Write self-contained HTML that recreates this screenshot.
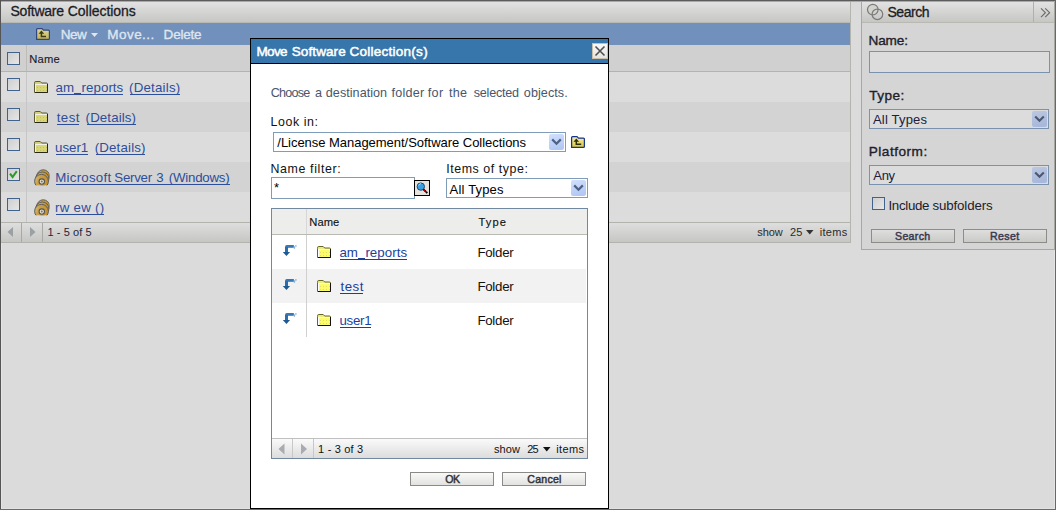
<!DOCTYPE html>
<html><head><meta charset="utf-8"><title>Software Collections</title>
<style>html,body{margin:0;padding:0;background:#dbdbdb;overflow:hidden;width:1056px;height:510px}text{font-family:"Liberation Sans", sans-serif}rect{shape-rendering:crispEdges}</style>
</head><body>
<svg width="1056" height="510" viewBox="0 0 1056 510" style="display:block">
<defs>
<linearGradient id="gTitle" x1="0" y1="0" x2="0" y2="1"><stop offset="0" stop-color="#e2e2e2"/><stop offset="1" stop-color="#c6c6c4"/></linearGradient>
<linearGradient id="gPager" x1="0" y1="0" x2="0" y2="1"><stop offset="0" stop-color="#dedede"/><stop offset="1" stop-color="#c6c6c4"/></linearGradient>
<linearGradient id="gPagerD" x1="0" y1="0" x2="0" y2="1"><stop offset="0" stop-color="#fafafa"/><stop offset="1" stop-color="#dcdcdc"/></linearGradient>
<linearGradient id="gBtn" x1="0" y1="0" x2="0" y2="1"><stop offset="0" stop-color="#e0e0e0"/><stop offset="1" stop-color="#c8c8c6"/></linearGradient>
<linearGradient id="gClose" x1="0" y1="0" x2="0" y2="1"><stop offset="0" stop-color="#fafafa"/><stop offset="1" stop-color="#e2e2de"/></linearGradient>
<linearGradient id="gBtnD" x1="0" y1="0" x2="0" y2="1"><stop offset="0" stop-color="#fbfbfb"/><stop offset="1" stop-color="#e0e0de"/></linearGradient>
<linearGradient id="gSel" x1="0" y1="0" x2="0.3" y2="1"><stop offset="0" stop-color="#d2e0fc"/><stop offset="1" stop-color="#b2c8f4"/></linearGradient>
<linearGradient id="gSelG" x1="0" y1="0" x2="0.3" y2="1"><stop offset="0" stop-color="#bcc8e2"/><stop offset="1" stop-color="#a8b8da"/></linearGradient>
<linearGradient id="gFU" x1="0" y1="0" x2="0" y2="1"><stop offset="0" stop-color="#f6eeb8"/><stop offset="1" stop-color="#dcc630"/></linearGradient>
<linearGradient id="gFUg" x1="0" y1="0" x2="0" y2="1"><stop offset="0" stop-color="#dcd6a8"/><stop offset="1" stop-color="#c4b448"/></linearGradient>
<pattern id="dots" width="3" height="3" patternUnits="userSpaceOnUse"><rect width="3" height="3" fill="#d9d676"/><rect width="1" height="1" fill="#c2be6a"/></pattern>
<pattern id="dotsB" width="3" height="3" patternUnits="userSpaceOnUse"><rect width="3" height="3" fill="#fcfc6a"/><rect width="1" height="1" fill="#dede66"/></pattern>

<linearGradient id="gCb" x1="0" y1="0" x2="1" y2="1"><stop offset="0" stop-color="#cfcfcf"/><stop offset="1" stop-color="#e6e6e6"/></linearGradient>






<linearGradient id="gDisc" x1="0" y1="0" x2="1" y2="0.4"><stop offset="0" stop-color="#d8c898"/><stop offset="0.4" stop-color="#c9a048"/><stop offset="1" stop-color="#c29030"/></linearGradient>



</defs><g><rect x="0" y="0" width="1056" height="510" fill="#dbdbdb" />
<rect x="1" y="243" width="1" height="266" fill="#e4e4e4" />
<rect x="1054" y="250" width="1" height="259" fill="#e4e4e4" />
<rect x="1" y="508" width="1054" height="1" fill="#e2e2e2" />
<rect x="1" y="2" width="850" height="20" fill="url(#gTitle)" />
<rect x="1" y="22" width="850" height="1" fill="#b9b9b2" />
<text x="10.50" y="16" font-size="14" fill="#1c1c26" font-weight="normal" stroke="#1c1c26" stroke-width="0.3" textLength="53.55" lengthAdjust="spacing">Software</text>
<text x="67.80" y="16" font-size="14" fill="#1c1c26" font-weight="normal" stroke="#1c1c26" stroke-width="0.3" textLength="67.98" lengthAdjust="spacing">Collections</text>
<rect x="1" y="23" width="850" height="22" fill="#7290bc" />
<g transform="translate(36,28)">
 <path d="M0.6 11.4 V1.6 Q0.6 0.6 1.6 0.6 H6 L7.5 2.1 H12.4 Q13.4 2.1 13.4 3.1 V10.4 Q13.4 11.4 12.4 11.4 Z" fill="url(#gFUg)" stroke="#31467e" stroke-width="1.2"/>
 <path d="M5.4 2.4 L8.2 5.8 H2.6 Z" fill="#3c3c18"/>
 <path d="M5.4 5 V8.5 H10" fill="none" stroke="#3c3c18" stroke-width="1.5"/>
</g>
<text x="60.80" y="39" font-size="13.5" fill="#dfe6ef" font-weight="normal" stroke="#dfe6ef" stroke-width="0.35" textLength="26.02" lengthAdjust="spacing">New</text>
<path d="M91 33 h7 l-3.5 4 z" fill="#dfe6ef"/>
<text x="107.30" y="39" font-size="13.5" fill="#dfe6ef" font-weight="normal" stroke="#dfe6ef" stroke-width="0.35" textLength="46.97" lengthAdjust="spacing">Move...</text>
<text x="163.60" y="39" font-size="13.5" fill="#dfe6ef" font-weight="normal" stroke="#dfe6ef" stroke-width="0.35" textLength="38.03" lengthAdjust="spacing">Delete</text>
<rect x="1" y="45" width="850" height="26" fill="#d0d0d0" />
<rect x="1" y="71" width="850" height="1" fill="#b4b4ac" />
<rect x="26" y="45" width="1" height="26" fill="#bdbdb6" />
<g transform="translate(7,52)"><rect x="0" y="0" width="13" height="13" fill="#40628c"/><rect x="1" y="1" width="11" height="11" fill="url(#gCb)"/></g>
<text x="29.20" y="63" font-size="11.2" fill="#1a1a28" font-weight="normal" stroke="#1a1a28" stroke-width="0.12" textLength="30.44" lengthAdjust="spacing">Name</text>
<rect x="1" y="72" width="849" height="30" fill="#dcdcdc" />
<rect x="26" y="72" width="1" height="30" fill="#c6c6c6" />
<g transform="translate(7,78)"><rect x="0" y="0" width="13" height="13" fill="#40628c"/><rect x="1" y="1" width="11" height="11" fill="url(#gCb)"/></g>
<rect x="1" y="102" width="849" height="30" fill="#d3d3d3" />
<rect x="26" y="102" width="1" height="30" fill="#c6c6c6" />
<g transform="translate(7,108)"><rect x="0" y="0" width="13" height="13" fill="#40628c"/><rect x="1" y="1" width="11" height="11" fill="url(#gCb)"/></g>
<rect x="1" y="132" width="849" height="30" fill="#dcdcdc" />
<rect x="26" y="132" width="1" height="30" fill="#c6c6c6" />
<g transform="translate(7,138)"><rect x="0" y="0" width="13" height="13" fill="#40628c"/><rect x="1" y="1" width="11" height="11" fill="url(#gCb)"/></g>
<rect x="1" y="162" width="849" height="30" fill="#d3d3d3" />
<rect x="26" y="162" width="1" height="30" fill="#c6c6c6" />
<g transform="translate(7,168)"><rect x="0" y="0" width="13" height="13" fill="#40628c"/><rect x="1" y="1" width="11" height="11" fill="url(#gCb)"/></g>
<rect x="1" y="192" width="849" height="30" fill="#dcdcdc" />
<rect x="26" y="192" width="1" height="30" fill="#c6c6c6" />
<g transform="translate(7,198)"><rect x="0" y="0" width="13" height="13" fill="#40628c"/><rect x="1" y="1" width="11" height="11" fill="url(#gCb)"/></g>
<g transform="translate(34,81)">
 <path d="M0.5 2.5 V1.8 Q0.5 0.5 1.8 0.5 H6.2 L7.7 2 H12.5 Q13.5 2 13.5 3 V11.5 H0.5 Z" fill="#d6d274" stroke="#5a5a3a" stroke-width="1"/>
 <rect x="1" y="3" width="12" height="8" fill="url(#dots)"/>
 <path d="M1 3.5 H13" stroke="#f2f2e6" stroke-width="1"/>
 <path d="M1.5 3 V11" stroke="#f2f2e6" stroke-width="1"/>
 <path d="M13.5 3 V11.5 H1" fill="none" stroke="#26261a" stroke-width="1"/>
</g>
<text x="55.50" y="92" font-size="13.3" fill="#2d4e9c" font-weight="normal" textLength="67.77" lengthAdjust="spacing">am_reports</text>
<rect x="56.5" y="94" width="66.5" height="1" fill="#2d4e9c" />
<rect x="74" y="93" width="7" height="1" fill="#2d4e9c" />
<text x="129.00" y="92" font-size="13.3" fill="#2d4e9c" font-weight="normal" textLength="51.20" lengthAdjust="spacing">(Details)</text>
<rect x="130" y="94" width="49.69999999999999" height="1" fill="#2d4e9c" />
<g transform="translate(34,111)">
 <path d="M0.5 2.5 V1.8 Q0.5 0.5 1.8 0.5 H6.2 L7.7 2 H12.5 Q13.5 2 13.5 3 V11.5 H0.5 Z" fill="#d6d274" stroke="#5a5a3a" stroke-width="1"/>
 <rect x="1" y="3" width="12" height="8" fill="url(#dots)"/>
 <path d="M1 3.5 H13" stroke="#f2f2e6" stroke-width="1"/>
 <path d="M1.5 3 V11" stroke="#f2f2e6" stroke-width="1"/>
 <path d="M13.5 3 V11.5 H1" fill="none" stroke="#26261a" stroke-width="1"/>
</g>
<text x="56.70" y="122" font-size="13.3" fill="#2d4e9c" font-weight="normal" textLength="22.74" lengthAdjust="spacing">test</text>
<rect x="56.7" y="124" width="22.299999999999997" height="1" fill="#2d4e9c" />
<text x="85.60" y="122" font-size="13.3" fill="#2d4e9c" font-weight="normal" textLength="50.40" lengthAdjust="spacing">(Details)</text>
<rect x="86.6" y="124" width="48.900000000000006" height="1" fill="#2d4e9c" />
<g transform="translate(34,141)">
 <path d="M0.5 2.5 V1.8 Q0.5 0.5 1.8 0.5 H6.2 L7.7 2 H12.5 Q13.5 2 13.5 3 V11.5 H0.5 Z" fill="#d6d274" stroke="#5a5a3a" stroke-width="1"/>
 <rect x="1" y="3" width="12" height="8" fill="url(#dots)"/>
 <path d="M1 3.5 H13" stroke="#f2f2e6" stroke-width="1"/>
 <path d="M1.5 3 V11" stroke="#f2f2e6" stroke-width="1"/>
 <path d="M13.5 3 V11.5 H1" fill="none" stroke="#26261a" stroke-width="1"/>
</g>
<text x="55.00" y="152" font-size="13.3" fill="#2d4e9c" font-weight="normal" textLength="33.27" lengthAdjust="spacing">user1</text>
<rect x="56" y="154" width="32" height="1" fill="#2d4e9c" />
<text x="94.70" y="152" font-size="13.3" fill="#2d4e9c" font-weight="normal" textLength="50.80" lengthAdjust="spacing">(Details)</text>
<rect x="95.7" y="154" width="49.3" height="1" fill="#2d4e9c" />
<g transform="translate(33,169)">
 <clipPath id="cpDisc"><rect x="0" y="0" width="16.5" height="16.3"/></clipPath>
 <g clip-path="url(#cpDisc)" stroke="#5c5c5c" stroke-width="1">
  <circle cx="10.2" cy="7.2" r="6.4" fill="url(#gDisc)"/>
  <circle cx="9.3" cy="9.7" r="6.7" fill="url(#gDisc)"/>
  <circle cx="8.5" cy="12.3" r="6.9" fill="url(#gDisc)"/>
 </g>
 <circle cx="8.8" cy="12.6" r="2.7" fill="#e4e0d0" stroke="#555" stroke-width="1.1"/>
 <circle cx="8.8" cy="12.6" r="1" fill="#777"/>
</g>
<g transform="translate(7,168)"><path d="M3 5.6 L5.6 9 L9.8 3.2" fill="none" stroke="#2c9c2c" stroke-width="2.1"/></g>
<text x="55.30" y="182" font-size="13.3" fill="#2d4e9c" font-weight="normal" textLength="55.84" lengthAdjust="spacing">Microsoft</text>
<text x="114.30" y="182" font-size="13.3" fill="#2d4e9c" font-weight="normal" textLength="37.87" lengthAdjust="spacing">Server</text>
<text x="156.30" y="182" font-size="13.3" fill="#2d4e9c" font-weight="normal" textLength="7.41" lengthAdjust="spacing">3</text>
<text x="168.80" y="182" font-size="13.3" fill="#2d4e9c" font-weight="normal" textLength="60.90" lengthAdjust="spacing">(Windows)</text>
<rect x="56" y="184" width="173.8" height="1" fill="#2d4e9c" />
<g transform="translate(33,199)">
 <clipPath id="cpDisc"><rect x="0" y="0" width="16.5" height="16.3"/></clipPath>
 <g clip-path="url(#cpDisc)" stroke="#5c5c5c" stroke-width="1">
  <circle cx="10.2" cy="7.2" r="6.4" fill="url(#gDisc)"/>
  <circle cx="9.3" cy="9.7" r="6.7" fill="url(#gDisc)"/>
  <circle cx="8.5" cy="12.3" r="6.9" fill="url(#gDisc)"/>
 </g>
 <circle cx="8.8" cy="12.6" r="2.7" fill="#e4e0d0" stroke="#555" stroke-width="1.1"/>
 <circle cx="8.8" cy="12.6" r="1" fill="#777"/>
</g>
<text x="55.00" y="212" font-size="13.3" fill="#2d4e9c" font-weight="normal" textLength="49.08" lengthAdjust="spacing">rw ew ()</text>
<rect x="56" y="214" width="47.8" height="1" fill="#2d4e9c" />
<rect x="1" y="222" width="850" height="1" fill="#b3b3ad" />
<rect x="1" y="223" width="850" height="19" fill="url(#gPager)" />
<rect x="1" y="242" width="850" height="1" fill="#b3b3ad" />
<rect x="21" y="223" width="1" height="19" fill="#a9a9a3" />
<rect x="42" y="223" width="1" height="19" fill="#a9a9a3" />
<path d="M7.5 232 L13 227 V237 Z" fill="#9aa0a4"/>
<path d="M35.5 232 L30 227 V237 Z" fill="#9aa0a4"/>
<text x="47.50" y="236" font-size="11" fill="#25253a" font-weight="normal" textLength="44.22" lengthAdjust="spacing">1 - 5 of 5</text>
<text x="757.20" y="236" font-size="11" fill="#2a2a2a" font-weight="normal" textLength="25.49" lengthAdjust="spacing">show</text>
<text x="790.00" y="236" font-size="11" fill="#2a2a2a" font-weight="normal" textLength="12.25" lengthAdjust="spacing">25</text>
<path d="M806 230 h7.5 l-3.75 4.5 z" fill="#333"/>
<text x="819.70" y="236" font-size="11" fill="#2a2a2a" font-weight="normal" textLength="27.58" lengthAdjust="spacing">items</text>
<rect x="850" y="1" width="1" height="242" fill="#b5b5b0" />
<rect x="861" y="1" width="194" height="249" fill="#d5d5d5" />
<rect x="862" y="2" width="192" height="20" fill="url(#gTitle)" />
<rect x="862" y="22" width="192" height="1" fill="#b9b9b2" />
<rect x="861" y="1" width="1" height="249" fill="#a8a8a2" />
<rect x="1054" y="1" width="1" height="249" fill="#a8a8a2" />
<rect x="861" y="249" width="194" height="1" fill="#a8a8a2" />
<rect x="1033" y="1" width="1" height="21" fill="#b0b0aa" />
<g fill="none" stroke="#7c7c7c" stroke-width="1.25"><circle cx="872.8" cy="9.6" r="5.3" fill="#d2d2ce"/><circle cx="877.4" cy="14.3" r="5.3"/></g>
<text x="887.40" y="17" font-size="14" fill="#1c1c26" font-weight="normal" stroke="#1c1c26" stroke-width="0.3" textLength="42.26" lengthAdjust="spacing">Search</text>
<path d="M1041 8.3 l4.4 4.4 l-4.4 4.4 M1045.2 8.3 l4.4 4.4 l-4.4 4.4" fill="none" stroke="#6a6a6a" stroke-width="1.15"/>
<text x="868.40" y="44.6" font-size="13.6" fill="#20202a" font-weight="normal" stroke="#20202a" stroke-width="0.35" textLength="39.65" lengthAdjust="spacing">Name:</text>
<rect x="869" y="51" width="181" height="22" fill="#dcdcdc" />
<rect x="869" y="51" width="181" height="1" fill="#7a92ad" />
<rect x="869" y="72" width="181" height="1" fill="#7a92ad" />
<rect x="869" y="51" width="1" height="22" fill="#7a92ad" />
<rect x="1049" y="51" width="1" height="22" fill="#7a92ad" />
<text x="869.20" y="99.6" font-size="13.6" fill="#20202a" font-weight="normal" stroke="#20202a" stroke-width="0.35" textLength="35.05" lengthAdjust="spacing">Type:</text>
<rect x="869" y="109" width="180" height="20" fill="#dcdcdc" />
<rect x="869" y="109" width="180" height="1" fill="#7a92ad" />
<rect x="869" y="128" width="180" height="1" fill="#7a92ad" />
<rect x="869" y="109" width="1" height="20" fill="#7a92ad" />
<rect x="1048" y="109" width="1" height="20" fill="#7a92ad" />
<g transform="translate(1032,111)"><rect x="0" y="0" width="15" height="16" rx="2" fill="url(#gSelG)" style="shape-rendering:auto"/><path d="M3.2 5.4 L7.5 9.7 L11.8 5.4" fill="none" stroke="#4c5870" stroke-width="2.1"/></g>
<text x="873.00" y="124" font-size="13" fill="#20203a" font-weight="normal" textLength="54.02" lengthAdjust="spacing">All Types</text>
<text x="868.70" y="155.6" font-size="13.6" fill="#20202a" font-weight="normal" stroke="#20202a" stroke-width="0.35" textLength="58.49" lengthAdjust="spacing">Platform:</text>
<rect x="869" y="165" width="180" height="20" fill="#dcdcdc" />
<rect x="869" y="165" width="180" height="1" fill="#7a92ad" />
<rect x="869" y="184" width="180" height="1" fill="#7a92ad" />
<rect x="869" y="165" width="1" height="20" fill="#7a92ad" />
<rect x="1048" y="165" width="1" height="20" fill="#7a92ad" />
<g transform="translate(1032,167)"><rect x="0" y="0" width="15" height="16" rx="2" fill="url(#gSelG)" style="shape-rendering:auto"/><path d="M3.2 5.4 L7.5 9.7 L11.8 5.4" fill="none" stroke="#4c5870" stroke-width="2.1"/></g>
<text x="873.30" y="180" font-size="13" fill="#20203a" font-weight="normal" textLength="21.81" lengthAdjust="spacing">Any</text>
<g transform="translate(872,197)"><rect x="0" y="0" width="13" height="13" fill="#40628c"/><rect x="1" y="1" width="11" height="11" fill="url(#gCb)"/></g>
<text x="888.40" y="209.5" font-size="13.3" fill="#20202a" font-weight="normal" textLength="41.09" lengthAdjust="spacing">Include</text>
<text x="932.50" y="209.5" font-size="13.3" fill="#20202a" font-weight="normal" textLength="60.16" lengthAdjust="spacing">subfolders</text>
<rect x="871" y="229" width="84" height="14" fill="url(#gBtn)" />
<rect x="871" y="229" width="84" height="1" fill="#8c8c88" />
<rect x="871" y="242" width="84" height="1" fill="#8c8c88" />
<rect x="871" y="229" width="1" height="14" fill="#8c8c88" />
<rect x="954" y="229" width="1" height="14" fill="#8c8c88" />
<text x="895.00" y="240" font-size="10.6" fill="#383850" font-weight="normal" stroke="#383850" stroke-width="0.45" textLength="35.18" lengthAdjust="spacing">Search</text>
<rect x="963" y="229" width="84" height="14" fill="url(#gBtn)" />
<rect x="963" y="229" width="84" height="1" fill="#8c8c88" />
<rect x="963" y="242" width="84" height="1" fill="#8c8c88" />
<rect x="963" y="229" width="1" height="14" fill="#8c8c88" />
<rect x="1046" y="229" width="1" height="14" fill="#8c8c88" />
<text x="990.00" y="240" font-size="10.6" fill="#383850" font-weight="normal" stroke="#383850" stroke-width="0.45" textLength="29.09" lengthAdjust="spacing">Reset</text>
<rect x="250" y="38" width="359" height="471" fill="#000" />
<rect x="251" y="39" width="357" height="24" fill="#3676ab" />
<rect x="251" y="64" width="357" height="444" fill="#ffffff" />
<rect x="592" y="43" width="16" height="16" fill="url(#gClose)" />
<rect x="592" y="43" width="16" height="1" fill="#c8beaa" />
<rect x="592" y="58" width="16" height="1" fill="#c8beaa" />
<rect x="592" y="43" width="1" height="16" fill="#c8beaa" />
<rect x="607" y="43" width="1" height="16" fill="#c8beaa" />
<path d="M595.5 46.5 L604.5 55.5 M604.5 46.5 L595.5 55.5" stroke="#505050" stroke-width="1.6"/>
<text x="256.40" y="56" font-size="13.5" fill="#ffffff" font-weight="normal" stroke="#ffffff" stroke-width="0.5" textLength="31.12" lengthAdjust="spacing">Move</text>
<text x="291.70" y="56" font-size="13.5" fill="#ffffff" font-weight="normal" stroke="#ffffff" stroke-width="0.5" textLength="53.98" lengthAdjust="spacing">Software</text>
<text x="349.40" y="56" font-size="13.5" fill="#ffffff" font-weight="normal" stroke="#ffffff" stroke-width="0.5" textLength="78.23" lengthAdjust="spacing">Collection(s)</text>
<text x="270.80" y="97" font-size="12.6" fill="#48566a" font-weight="normal" textLength="39.52" lengthAdjust="spacing">Choose</text>
<text x="315.00" y="97" font-size="12.6" fill="#48566a" font-weight="normal" textLength="5.72" lengthAdjust="spacing">a</text>
<text x="325.80" y="97" font-size="12.6" fill="#48566a" font-weight="normal" textLength="61.32" lengthAdjust="spacing">destination</text>
<text x="391.40" y="97" font-size="12.6" fill="#48566a" font-weight="normal" textLength="32.72" lengthAdjust="spacing">folder</text>
<text x="427.80" y="97" font-size="12.6" fill="#48566a" font-weight="normal" textLength="15.30" lengthAdjust="spacing">for</text>
<text x="449.10" y="97" font-size="12.6" fill="#48566a" font-weight="normal" textLength="18.02" lengthAdjust="spacing">the</text>
<text x="473.80" y="97" font-size="12.6" fill="#48566a" font-weight="normal" textLength="45.22" lengthAdjust="spacing">selected</text>
<text x="523.80" y="97" font-size="12.6" fill="#48566a" font-weight="normal" textLength="43.91" lengthAdjust="spacing">objects.</text>
<text x="270.50" y="126" font-size="12.4" fill="#111" font-weight="normal" textLength="47.51" lengthAdjust="spacing">Look in:</text>
<rect x="273" y="132" width="293" height="1" fill="#7f9db9" />
<rect x="273" y="151" width="293" height="1" fill="#7f9db9" />
<rect x="273" y="132" width="1" height="20" fill="#7f9db9" />
<rect x="565" y="132" width="1" height="20" fill="#7f9db9" />
<g transform="translate(549,134)"><rect x="0" y="0" width="15" height="16" rx="2" fill="url(#gSel)" style="shape-rendering:auto"/><path d="M3.2 5.4 L7.5 9.7 L11.8 5.4" fill="none" stroke="#4d6185" stroke-width="2.2"/></g>
<text x="277.30" y="147" font-size="13" fill="#000" font-weight="normal" textLength="248.73" lengthAdjust="spacing">/License Management/Software Collections</text>
<g transform="translate(571,136)">
 <path d="M0.6 11.4 V1.6 Q0.6 0.6 1.6 0.6 H6 L7.5 2.1 H12.4 Q13.4 2.1 13.4 3.1 V10.4 Q13.4 11.4 12.4 11.4 Z" fill="url(#gFU)" stroke="#15358a" stroke-width="1.25"/>
 <path d="M5.3 2.4 L8.1 5.8 H2.5 Z" fill="#30300c"/>
 <path d="M5.3 5 V8.3 H10.2" fill="none" stroke="#30300c" stroke-width="1.5"/>
</g>
<text x="270.40" y="173" font-size="12.4" fill="#111" font-weight="normal" textLength="70.36" lengthAdjust="spacing">Name filter:</text>
<text x="446.30" y="173" font-size="12.4" fill="#111" font-weight="normal" textLength="81.57" lengthAdjust="spacing">Items of type:</text>
<rect x="271" y="177" width="144" height="1" fill="#7f9db9" />
<rect x="271" y="198" width="144" height="1" fill="#7f9db9" />
<rect x="271" y="177" width="1" height="22" fill="#7f9db9" />
<rect x="414" y="177" width="1" height="22" fill="#7f9db9" />
<text x="274" y="192" font-size="13" fill="#000" font-weight="normal" style='font-family:"Liberation Sans", sans-serif' >*</text>
<rect x="414" y="180" width="16" height="16" fill="#000" />
<rect x="415" y="181" width="14" height="14" fill="#e6e3dc" />
<circle cx="420.8" cy="186.6" r="3.7" fill="#3a9ee0" stroke="#164a78" stroke-width="1"/>
<path d="M418.6 185.6 Q419.2 183.8 421 183.6" fill="none" stroke="#a8e0ff" stroke-width="1"/>
<path d="M423.5 189.3 L427.3 193.1" stroke="#d00000" stroke-width="1.8"/>
<path d="M423.5 189.3 L427.3 193.1" stroke="#000" stroke-width="1.8" stroke-dasharray="1 1"/>
<rect x="446" y="178" width="142" height="1" fill="#7f9db9" />
<rect x="446" y="197" width="142" height="1" fill="#7f9db9" />
<rect x="446" y="178" width="1" height="20" fill="#7f9db9" />
<rect x="587" y="178" width="1" height="20" fill="#7f9db9" />
<g transform="translate(571,180)"><rect x="0" y="0" width="15" height="16" rx="2" fill="url(#gSel)" style="shape-rendering:auto"/><path d="M3.2 5.4 L7.5 9.7 L11.8 5.4" fill="none" stroke="#4d6185" stroke-width="2.2"/></g>
<text x="449.60" y="193.5" font-size="13" fill="#000" font-weight="normal" textLength="53.92" lengthAdjust="spacing">All Types</text>
<rect x="272" y="209" width="315" height="25" fill="#ededeb" />
<rect x="272" y="234" width="315" height="1" fill="#b9bbb2" />
<rect x="306" y="209" width="1" height="25" fill="#d6d6d6" />
<text x="309.30" y="226" font-size="11.2" fill="#111" font-weight="normal" stroke="#111" stroke-width="0.12" textLength="30.04" lengthAdjust="spacing">Name</text>
<text x="478.40" y="226" font-size="11.2" fill="#111" font-weight="normal" stroke="#111" stroke-width="0.12" textLength="27.67" lengthAdjust="spacing">Type</text>
<rect x="272" y="235" width="314" height="34" fill="#ffffff" />
<rect x="306" y="235" width="1" height="34" fill="#d0d0d0" />
<g transform="translate(282,245)">
 <path d="M5 0 H11.8 V2.8 H6 V7.4 H3 V2.2 Q3 0 5 0 Z" fill="#2c6eac"/>
 <path d="M4 1 H11" stroke="#4a8cc8" stroke-width="0.8"/>
 <path d="M0.8 7 H8.1 L4.45 11 Z" fill="#1d5a94"/>
 <rect x="12" y="1.5" width="1.2" height="1.2" fill="#5b94cc" style="shape-rendering:auto"/>
 <rect x="13.3" y="0.3" width="1.2" height="1.2" fill="#5b94cc" style="shape-rendering:auto"/>
 <rect x="11.8" y="3" width="1" height="1" fill="#8ab4de" style="shape-rendering:auto"/>
</g>
<g transform="translate(317,246)">
 <path d="M0.5 2.5 V1.8 Q0.5 0.5 1.8 0.5 H6.2 L7.7 2 H12.5 Q13.5 2 13.5 3 V11.5 H0.5 Z" fill="#ecec80" stroke="#66662a" stroke-width="1"/>
 <rect x="1" y="3" width="12" height="8" fill="url(#dotsB)"/>
 <path d="M1 3.5 H13" stroke="#ffffff" stroke-width="1"/>
 <path d="M1.5 3 V11" stroke="#ffffff" stroke-width="1"/>
 <path d="M13.5 3 V11.5 H1" fill="none" stroke="#111" stroke-width="1"/>
</g>
<text x="339.40" y="257" font-size="13.3" fill="#1b3f9e" font-weight="normal" textLength="67.67" lengthAdjust="spacing">am_reports</text>
<rect x="340.4" y="259" width="66.40000000000003" height="1" fill="#1b3f9e" />
<rect x="358" y="258" width="7" height="1" fill="#1b3f9e" />
<text x="477.40" y="257" font-size="13.3" fill="#111" font-weight="normal" textLength="36.30" lengthAdjust="spacing">Folder</text>
<rect x="272" y="269" width="314" height="34" fill="#f2f2f2" />
<rect x="306" y="269" width="1" height="34" fill="#d0d0d0" />
<g transform="translate(282,279)">
 <path d="M5 0 H11.8 V2.8 H6 V7.4 H3 V2.2 Q3 0 5 0 Z" fill="#2c6eac"/>
 <path d="M4 1 H11" stroke="#4a8cc8" stroke-width="0.8"/>
 <path d="M0.8 7 H8.1 L4.45 11 Z" fill="#1d5a94"/>
 <rect x="12" y="1.5" width="1.2" height="1.2" fill="#5b94cc" style="shape-rendering:auto"/>
 <rect x="13.3" y="0.3" width="1.2" height="1.2" fill="#5b94cc" style="shape-rendering:auto"/>
 <rect x="11.8" y="3" width="1" height="1" fill="#8ab4de" style="shape-rendering:auto"/>
</g>
<g transform="translate(317,280)">
 <path d="M0.5 2.5 V1.8 Q0.5 0.5 1.8 0.5 H6.2 L7.7 2 H12.5 Q13.5 2 13.5 3 V11.5 H0.5 Z" fill="#ecec80" stroke="#66662a" stroke-width="1"/>
 <rect x="1" y="3" width="12" height="8" fill="url(#dotsB)"/>
 <path d="M1 3.5 H13" stroke="#ffffff" stroke-width="1"/>
 <path d="M1.5 3 V11" stroke="#ffffff" stroke-width="1"/>
 <path d="M13.5 3 V11.5 H1" fill="none" stroke="#111" stroke-width="1"/>
</g>
<text x="340.40" y="291" font-size="13.3" fill="#1b3f9e" font-weight="normal" textLength="23.04" lengthAdjust="spacing">test</text>
<rect x="340.4" y="293" width="22.600000000000023" height="1" fill="#1b3f9e" />
<text x="477.40" y="291" font-size="13.3" fill="#111" font-weight="normal" textLength="36.30" lengthAdjust="spacing">Folder</text>
<rect x="272" y="303" width="314" height="34" fill="#ffffff" />
<rect x="306" y="303" width="1" height="34" fill="#d0d0d0" />
<g transform="translate(282,313)">
 <path d="M5 0 H11.8 V2.8 H6 V7.4 H3 V2.2 Q3 0 5 0 Z" fill="#2c6eac"/>
 <path d="M4 1 H11" stroke="#4a8cc8" stroke-width="0.8"/>
 <path d="M0.8 7 H8.1 L4.45 11 Z" fill="#1d5a94"/>
 <rect x="12" y="1.5" width="1.2" height="1.2" fill="#5b94cc" style="shape-rendering:auto"/>
 <rect x="13.3" y="0.3" width="1.2" height="1.2" fill="#5b94cc" style="shape-rendering:auto"/>
 <rect x="11.8" y="3" width="1" height="1" fill="#8ab4de" style="shape-rendering:auto"/>
</g>
<g transform="translate(317,314)">
 <path d="M0.5 2.5 V1.8 Q0.5 0.5 1.8 0.5 H6.2 L7.7 2 H12.5 Q13.5 2 13.5 3 V11.5 H0.5 Z" fill="#ecec80" stroke="#66662a" stroke-width="1"/>
 <rect x="1" y="3" width="12" height="8" fill="url(#dotsB)"/>
 <path d="M1 3.5 H13" stroke="#ffffff" stroke-width="1"/>
 <path d="M1.5 3 V11" stroke="#ffffff" stroke-width="1"/>
 <path d="M13.5 3 V11.5 H1" fill="none" stroke="#111" stroke-width="1"/>
</g>
<text x="339.40" y="325" font-size="13.3" fill="#1b3f9e" font-weight="normal" textLength="32.27" lengthAdjust="spacing">user1</text>
<rect x="340.4" y="327" width="31.0" height="1" fill="#1b3f9e" />
<text x="477.40" y="325" font-size="13.3" fill="#111" font-weight="normal" textLength="36.30" lengthAdjust="spacing">Folder</text>
<rect x="272" y="438" width="315" height="1" fill="#c0c0c0" />
<rect x="272" y="439" width="315" height="19" fill="url(#gPagerD)" />
<rect x="292" y="439" width="1" height="19" fill="#c8c8c8" />
<rect x="313" y="439" width="1" height="19" fill="#c8c8c8" />
<path d="M278.5 449 L284.5 443.5 V454.5 Z" fill="#a8acb0"/>
<path d="M307 449 L301 443.5 V454.5 Z" fill="#a8acb0"/>
<rect x="271" y="208" width="317" height="1" fill="#7089a0" />
<rect x="271" y="458" width="317" height="1" fill="#7089a0" />
<rect x="271" y="208" width="1" height="251" fill="#7089a0" />
<rect x="587" y="208" width="1" height="251" fill="#7089a0" />
<text x="318.10" y="453" font-size="11" fill="#111" font-weight="normal" textLength="45.02" lengthAdjust="spacing">1 - 3 of 3</text>
<text x="494.00" y="453" font-size="11" fill="#111" font-weight="normal" textLength="25.89" lengthAdjust="spacing">show</text>
<text x="527.30" y="453" font-size="11" fill="#111" font-weight="normal" textLength="11.35" lengthAdjust="spacing">25</text>
<path d="M543 447 h7.5 l-3.75 4.5 z" fill="#111"/>
<text x="556.30" y="453" font-size="11" fill="#111" font-weight="normal" textLength="27.68" lengthAdjust="spacing">items</text>
<rect x="410" y="472" width="84" height="14" fill="url(#gBtnD)" />
<rect x="410" y="472" width="84" height="1" fill="#8a8a86" />
<rect x="410" y="485" width="84" height="1" fill="#8a8a86" />
<rect x="410" y="472" width="1" height="14" fill="#8a8a86" />
<rect x="493" y="472" width="1" height="14" fill="#8a8a86" />
<text x="445.30" y="483" font-size="10.6" fill="#333" font-weight="normal" stroke="#333" stroke-width="0.45" textLength="14.81" lengthAdjust="spacing">OK</text>
<rect x="502" y="472" width="84" height="14" fill="url(#gBtnD)" />
<rect x="502" y="472" width="84" height="1" fill="#8a8a86" />
<rect x="502" y="485" width="84" height="1" fill="#8a8a86" />
<rect x="502" y="472" width="1" height="14" fill="#8a8a86" />
<rect x="585" y="472" width="1" height="14" fill="#8a8a86" />
<text x="527.30" y="483" font-size="10.6" fill="#333" font-weight="normal" stroke="#333" stroke-width="0.45" textLength="34.18" lengthAdjust="spacing">Cancel</text>
<rect x="0" y="0" width="1056" height="1" fill="#5c5c5c" />
<rect x="1" y="1" width="1054" height="1" fill="#a9a9a5" />
<rect x="0" y="0" width="1" height="510" fill="#555555" />
<rect x="1055" y="0" width="1" height="510" fill="#686868" />
<rect x="0" y="509" width="1056" height="1" fill="#6a6a6a" /></g></svg>
</body></html>
